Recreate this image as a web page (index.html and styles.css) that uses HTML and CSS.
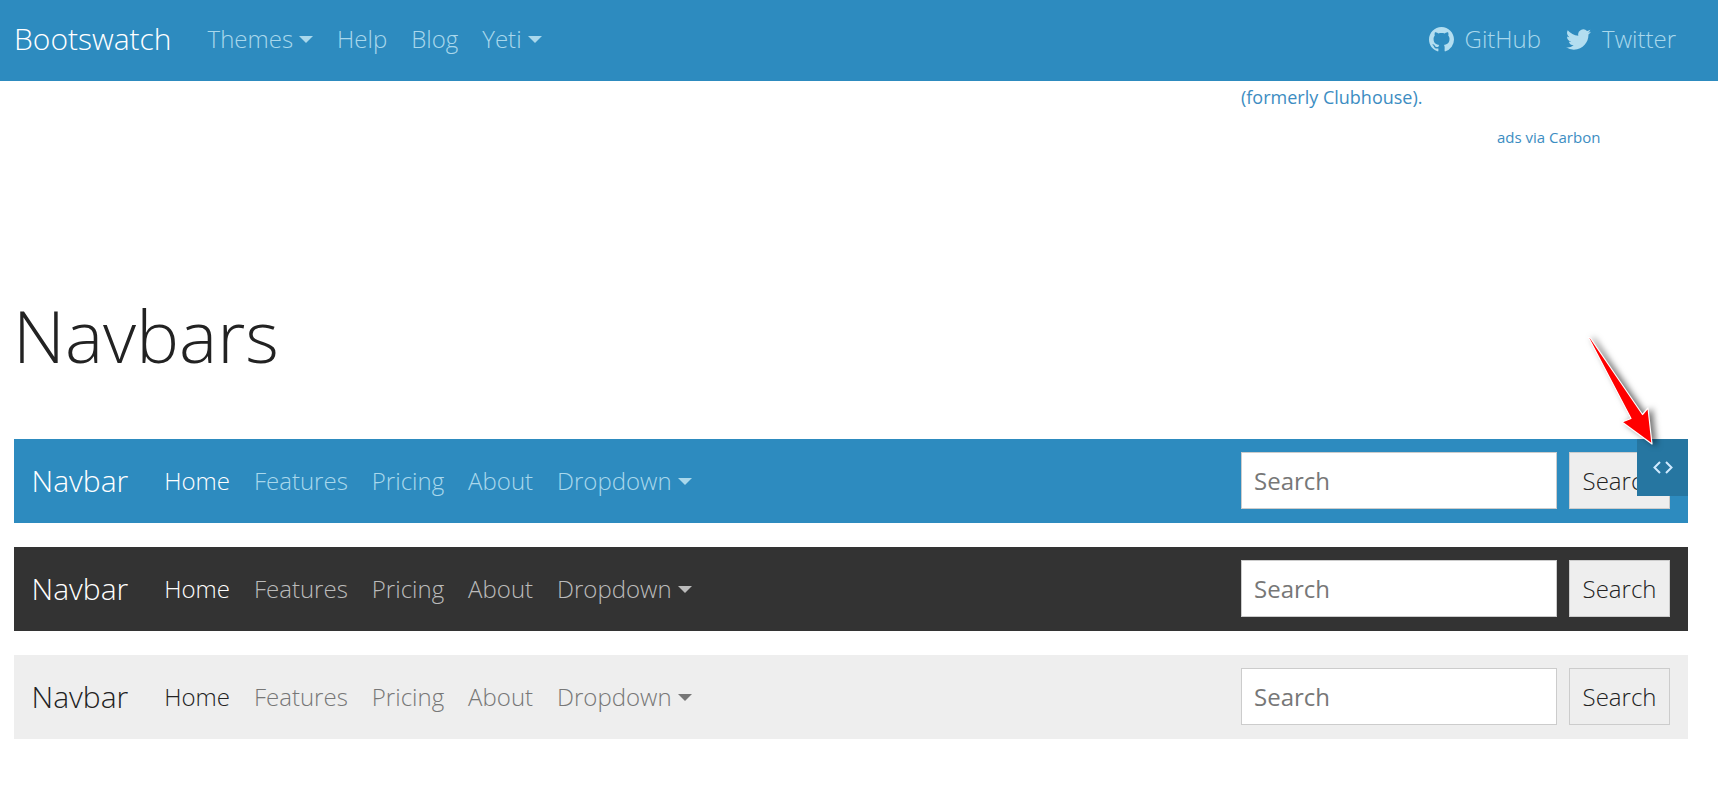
FILE: index.html
```html
<!DOCTYPE html>
<html lang="en">
<head>
<meta charset="utf-8">
<title>Bootswatch: Yeti</title>
<link rel="stylesheet" href="styles.css">
</head>
<body>
<header class="topbar">
  <a class="topbar-brand" href="#">Bootswatch</a>
  <nav class="topbar-nav">
    <a href="#">Themes<span class="caret"></span></a>
    <a href="#">Help</a>
    <a href="#">Blog</a>
    <a href="#">Yeti<span class="caret"></span></a>
  </nav>
  <nav class="topbar-social">
    <a href="#"><svg class="social-icon" viewBox="0 0 16 16"><path fill-rule="evenodd" d="M8 0C3.58 0 0 3.58 0 8c0 3.54 2.29 6.53 5.47 7.59.4.07.55-.17.55-.38 0-.19-.01-.82-.01-1.49-2.01.37-2.53-.49-2.69-.94-.09-.23-.48-.94-.82-1.13-.28-.15-.68-.52-.01-.53.63-.01 1.08.58 1.23.82.72 1.21 1.87.87 2.33.66.07-.52.28-.87.51-1.07-1.78-.2-3.64-.89-3.64-3.95 0-.87.31-1.59.82-2.15-.08-.2-.36-1.02.08-2.12 0 0 .67-.21 2.2.82.64-.18 1.32-.27 2-.27s1.36.09 2 .27c1.53-1.04 2.2-.82 2.2-.82.44 1.1.16 1.92.08 2.12.51.56.82 1.27.82 2.15 0 3.07-1.87 3.75-3.65 3.95.29.25.54.73.54 1.48 0 1.07-.01 1.93-.01 2.2 0 .21.15.46.55.38A8.01 8.01 0 0 0 16 8c0-4.42-3.58-8-8-8z"/></svg>GitHub</a>
    <a href="#"><svg class="social-icon" viewBox="0 0 16 16"><path d="M5.03 14.5c6.04 0 9.34-5 9.34-9.34 0-.14 0-.28-.01-.42A6.68 6.68 0 0 0 16 3.04a6.55 6.55 0 0 1-1.89.52 3.3 3.3 0 0 0 1.45-1.82 6.57 6.57 0 0 1-2.08.8 3.28 3.28 0 0 0-5.6 3 9.32 9.32 0 0 1-6.76-3.44 3.29 3.29 0 0 0 1.02 4.39A3.26 3.26 0 0 1 .66 6.07v.04a3.29 3.29 0 0 0 2.63 3.22 3.3 3.3 0 0 1-1.48.06 3.29 3.29 0 0 0 3.07 2.28A6.59 6.59 0 0 1 0 13.03a9.29 9.29 0 0 0 5.03 1.47z"/></svg>Twitter</a>
  </nav>
</header>

<main class="page">
  <div class="ad">
    <a class="ad-text" href="#">(formerly Clubhouse).</a>
    <a class="ad-credit" href="#">ads via Carbon</a>
  </div>

  <h1 class="page-title">Navbars</h1>

  <div class="bs-component">
    <nav class="navbar navbar-primary">
      <a class="navbar-brand" href="#">Navbar</a>
      <div class="navbar-links">
        <a class="active" href="#">Home</a>
        <a href="#">Features</a>
        <a href="#">Pricing</a>
        <a href="#">About</a>
        <a href="#">Dropdown<span class="caret"></span></a>
      </div>
      <form class="navbar-search">
        <input class="search-input" type="text" placeholder="Search">
        <button class="search-button" type="button">Search</button>
      </form>
    </nav>
    <button class="source-button" type="button">
      <svg viewBox="0 0 20 13" class="source-icon"><path d="M7 1 1.500 6.500 7 12M13 1l5.500 5.500L13 12"/></svg>
    </button>
    <svg class="arrow" viewBox="0 0 72 112" aria-hidden="true"><path d="M3.500 2.500 5 2.500 57.500 79.500 63 73 67 109 37 87 46 83.500Z"/></svg>
  </div>

  <nav class="navbar navbar-dark">
    <a class="navbar-brand" href="#">Navbar</a>
    <div class="navbar-links">
      <a class="active" href="#">Home</a>
      <a href="#">Features</a>
      <a href="#">Pricing</a>
      <a href="#">About</a>
      <a href="#">Dropdown<span class="caret"></span></a>
    </div>
    <form class="navbar-search">
      <input class="search-input" type="text" placeholder="Search">
      <button class="search-button" type="button">Search</button>
    </form>
  </nav>

  <nav class="navbar navbar-light">
    <a class="navbar-brand" href="#">Navbar</a>
    <div class="navbar-links">
      <a class="active" href="#">Home</a>
      <a href="#">Features</a>
      <a href="#">Pricing</a>
      <a href="#">About</a>
      <a href="#">Dropdown<span class="caret"></span></a>
    </div>
    <form class="navbar-search">
      <input class="search-input" type="text" placeholder="Search">
      <button class="search-button" type="button">Search</button>
    </form>
  </nav>
</main>
</body>
</html>
```

FILE: styles.css
```css
* { box-sizing: border-box; }
html, body { margin: 0; padding: 0; }
body {
  font-family: "Open Sans", "Liberation Sans", sans-serif;
  font-weight: 300;
  font-size: 24px;
  color: #222;
  background: #fff;
  overflow: hidden;
  height: 790px;
}
a { text-decoration: none; color: inherit; }

.topbar {
  display: flex;
  align-items: center;
  height: 81px;
  padding: 0 14px 5px;
  background: #2d8bbf;
}
.topbar-brand { font-size: 30px; color: #fff; margin-right: 36px; }
.topbar-nav, .topbar-social { display: flex; align-items: center; }
.topbar-nav { gap: 24px; color: #a9d8ec; }
.topbar-social { margin-left: auto; gap: 25px; color: #a9d8ec; padding-right: 28px; }
.topbar-social a { display: flex; align-items: center; }
.social-icon { width: 25px; height: 25px; fill: #b3def0; margin: 2px 11px 0 0; }

.caret {
  display: inline-block;
  margin-left: 6px;
  vertical-align: 5px;
  border-top: 7px solid currentColor;
  border-left: 7px solid transparent;
  border-right: 7px solid transparent;
}

.page { padding: 0 30px 0 14px; }
.ad { display: flex; flex-direction: column; padding-left: 1227px; height: 190px; }
.ad-text { font-size: 18px; font-weight: 400; color: #3c8dc2; line-height: 24px; margin-top: 4px; }
.ad-credit { font-size: 15px; font-weight: 400; color: #3c8dc2; line-height: 20px; margin-top: 18px; margin-left: 256px; }

.page-title { margin: 8px 0 47px -1px; font-size: 72px; font-weight: 300; line-height: 113px; color: #222; }

.bs-component { position: relative; }

.navbar {
  display: flex;
  align-items: center;
  height: 84px;
  padding: 0 18px 2px 17.500px;
  margin-bottom: 24px;
}
.navbar-brand { font-size: 30px; margin-right: 36px; }
.navbar-links { display: flex; align-items: center; gap: 24px; }
.navbar-search { display: flex; margin-left: auto; gap: 12px; }
.search-input {
  width: 316px;
  height: 57px;
  padding: 0 12px;
  border: 1px solid #ccc;
  background: #fff;
  font: 300 24px "Open Sans", sans-serif;
  outline: none;
}
.search-input::placeholder { color: #777; opacity: 1; font-weight: 400; }
.search-button {
  width: 101px;
  height: 57px;
  padding: 0;
  border: 1px solid #ccc;
  background: #eee;
  color: #222;
  font: 300 24px "Open Sans", sans-serif;
}

.navbar-primary { background: #2d8bbf; color: #fff; }
.navbar-primary .navbar-links { color: #a9d8ec; }
.navbar-primary .active { color: #fff; }
.navbar-dark { background: #333; color: #fff; }
.navbar-dark .navbar-links { color: #bbb; }
.navbar-dark .active { color: #fff; }
.navbar-light { background: #eee; color: #222; }
.navbar-light .navbar-links { color: #777; }
.navbar-light .active { color: #222; }
.navbar-light .search-button { background: transparent; }

.source-button {
  position: absolute;
  top: 0;
  right: 0;
  width: 51px;
  height: 57px;
  padding: 0;
  border: 0;
  background: #2676a1;
  display: flex;
  align-items: center;
  justify-content: center;
}
.source-icon { width: 20px; height: 13px; fill: none; stroke: #cfeaff; stroke-width: 2; }

.arrow {
  position: absolute;
  top: -104px;
  right: 31px;
  width: 72px;
  height: 112px;
  overflow: visible;
  filter: drop-shadow(4px 1px 3px rgba(0,0,0,.55));
}
.arrow path { fill: #f00; stroke: #fff; stroke-width: 1.200; stroke-linejoin: round; }
```
